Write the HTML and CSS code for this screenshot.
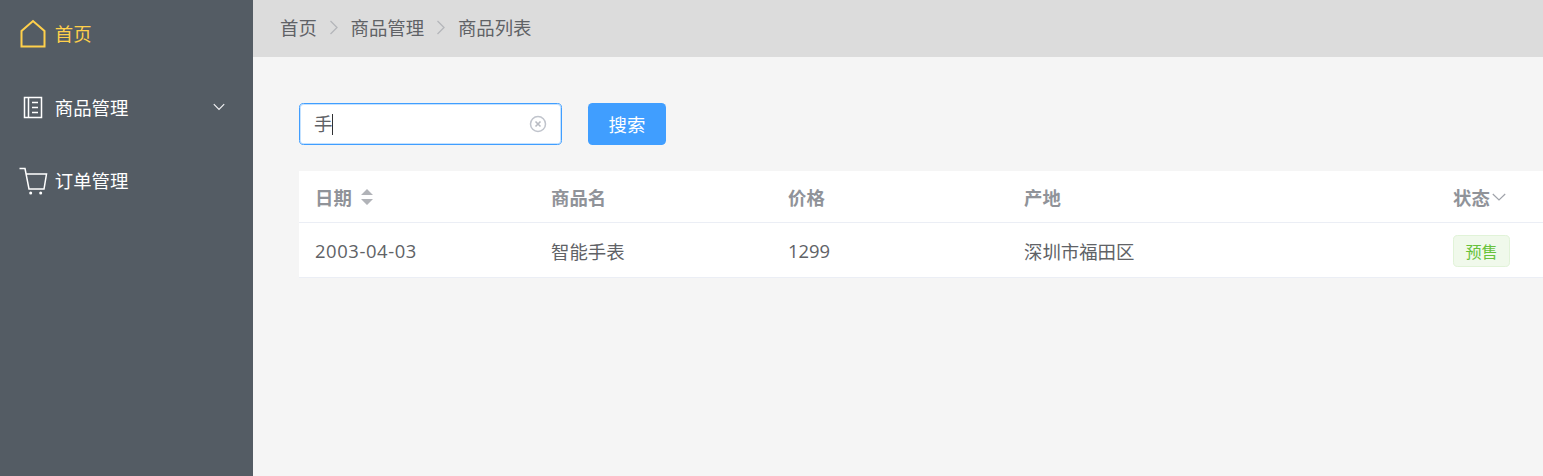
FILE: index.html
```html
<!DOCTYPE html>
<html lang="zh-CN">
<head>
<meta charset="utf-8">
<title>商品列表</title>
<link rel="stylesheet" href="styles.css">
</head>
<body>
<div class="app">
  <aside class="sidebar">
    <div class="menu-item active">
      <svg class="menu-icon" width="28" height="30" viewBox="0 0 28 30"><path d="M2.500 27.500V12L14 2l11.500 10v15.500z" fill="none" stroke="#ffd04b" stroke-width="2"/></svg>
      <span class="menu-text">首页</span>
    </div>
    <div class="menu-item">
      <svg class="menu-icon" width="28" height="30" viewBox="0 0 28 30"><path d="M5.500 5.500h17v20h-17zM9.500 5.500v20" fill="none" stroke="#fff" stroke-width="1.500"/><path d="M13 10.500h6M13 15.500h6M13 20.500h6" fill="none" stroke="#fff" stroke-width="1.300"/></svg>
      <span class="menu-label">商品管理</span>
      <svg class="menu-arrow" width="12" height="8" viewBox="0 0 12 8"><path d="M.8 1.200 6 6.400l5.200-5.200" fill="none" stroke="#f2f3f5" stroke-width="1.200"/></svg>
    </div>
    <div class="menu-item">
      <svg class="menu-icon cart" width="30" height="30" viewBox="0 0 30 30"><path d="M.5 2.500h5.500L10 23h15l2.500-15H6.500" fill="none" stroke="#fff" stroke-width="1.500"/><circle cx="11.700" cy="27" r="1.500" fill="#fff"/><circle cx="21.700" cy="27" r="1.500" fill="#fff"/></svg>
      <span class="menu-text">订单管理</span>
    </div>
  </aside>
  <main class="main">
    <nav class="breadcrumb">
      <span>首页</span>
      <svg class="sep" width="10" height="15" viewBox="0 0 10 15"><path d="M1.500 1 8 7.500 1.500 14" fill="none" stroke="#b4b6ba" stroke-width="1.300"/></svg>
      <span>商品管理</span>
      <svg class="sep" width="10" height="15" viewBox="0 0 10 15"><path d="M1.500 1 8 7.500 1.500 14" fill="none" stroke="#b4b6ba" stroke-width="1.300"/></svg>
      <span>商品列表</span>
    </nav>
    <section class="content">
      <div class="search">
        <div class="input">
          <span class="input-text">手</span><span class="caret"></span>
          <svg class="clear" width="18" height="18" viewBox="0 0 18 18"><circle cx="9" cy="9" r="7.500" fill="none" stroke="#c0c4cc" stroke-width="1.500"/><path d="M6.500 6.500l5 5M11.500 6.500l-5 5" stroke="#b8bbc2" stroke-width="1.600"/></svg>
        </div>
        <button class="btn" type="button">搜索</button>
      </div>
      <table class="table">
        <thead>
          <tr>
            <th class="col"><span class="th-inner">日期<svg class="sort" width="12" height="18" viewBox="0 0 12 18"><path d="M6 1l6 6H0zM6 17l6-6H0z" fill="#b1b3b8"/></svg></span></th>
            <th class="col-b">商品名</th>
            <th class="col">价格</th>
            <th class="col-wide">产地</th>
            <th><span class="th-inner narrow">状态<svg width="14" height="8" viewBox="0 0 14 8"><path d="M.8 1 7 7l6.200-6" fill="none" stroke="#a0a3aa" stroke-width="1.200"/></svg></span></th>
          </tr>
        </thead>
        <tbody>
          <tr>
            <td class="date">2003-04-03</td>
            <td>智能手表</td>
            <td>1299</td>
            <td>深圳市福田区</td>
            <td><span class="tag">预售</span></td>
          </tr>
        </tbody>
      </table>
    </section>
  </main>
</div>
</body>
</html>
```
FILE: styles.css
```css
* { box-sizing: border-box; }
html, body { margin: 0; height: 100%; overflow: hidden; }
body {
  font-family: "Open Sans", "Noto Sans CJK SC", sans-serif;
  font-size: 18.4px;
  color: #606266;
}
.app { display: flex; height: 476px; }
.sidebar {
  width: 253px;
  flex: none;
  background: #545c64;
  color: #fff;
}
.menu-item {
  height: 73.500px;
  display: flex;
  align-items: center;
  padding-left: 19px;
}
.menu-item:first-child { margin-top: -3px; }
.menu-item.active { color: #ffd04b; }
.menu-icon { flex: none; margin-right: 7.800px; }
.menu-icon.cart { margin-right: 5.800px; }
.menu-text { padding-bottom: 2px; }
.menu-label { flex: 1; }
.menu-arrow { margin-right: 28px; }
.main { flex: 1; min-width: 0; background: #f5f5f5; }
.breadcrumb {
  height: 57px;
  background: #dcdcdc;
  display: flex;
  align-items: center;
  padding: 0 0 3px 27px;
  gap: 11.900px;
}
.content { padding: 46px 0 0 46px; }
.search { display: flex; gap: 26px; height: 42px; }
.input {
  width: 263px;
  height: 42px;
  background: #fff;
  border: 1px solid #409eff;
  box-shadow: inset 0 0 0 1px rgba(64, 158, 255, 0.3);
  border-radius: 4.600px;
  display: flex;
  align-items: center;
  padding-left: 14px;
  position: relative;
}
.input-text { line-height: 1; }
.caret { width: 1px; height: 21px; background: #303133; }
.clear { position: absolute; right: 14px; top: 11px; }
.btn {
  width: 78px;
  height: 42px;
  border: 0;
  border-radius: 4.600px;
  background: #409eff;
  color: #fff;
  font: inherit;
  padding: 0;
}
.table {
  margin-top: 26px;
  width: 1244px;
  border-collapse: collapse;
  table-layout: fixed;
  background: #fff;
}
.table th, .table td {
  padding: 2px 0 0 16px;
  text-align: left;
  border-bottom: 1px solid #ebeef5;
}
.table th { height: 51px; color: #909399; font-weight: 700; }
.table td { height: 55px; }
.col { width: 236px; }
.col-b { width: 237px; }
.col-wide { width: 429px; }
.date { letter-spacing: 0.6px; }
.th-inner { display: flex; align-items: center; gap: 9px; }
.th-inner.narrow { gap: 2px; }
.tag {
  display: inline-flex;
  align-items: center;
  justify-content: center;
  vertical-align: middle;
  width: 57px;
  height: 32px;
  font-size: 16.100px;
  color: #67c23a;
  background: #f0f9eb;
  border: 1px solid #e1f3d8;
  border-radius: 4.600px;
}
```
